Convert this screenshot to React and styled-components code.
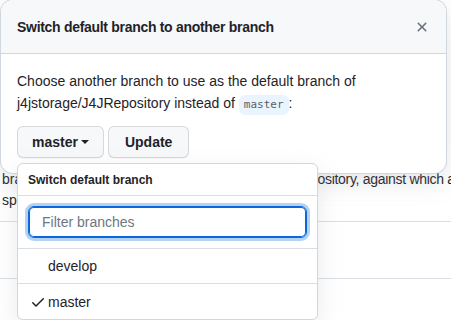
import React from 'react'
import styled, { createGlobalStyle } from 'styled-components'

const GlobalStyle = createGlobalStyle`
	body {
		margin: 0;
		background: #fff;
		font-family: 'Liberation Sans', Arial, sans-serif;
		color: #1f2328;
		overflow: hidden;
	}
`

const XIcon = () => (
	<svg width='16' height='16' viewBox='0 0 16 16' fill='currentColor'>
		<path d='M3.72 3.72a.75.75 0 0 1 1.06 0L8 6.94l3.22-3.22a.749.749 0 0 1 1.275.326.749.749 0 0 1-.215.734L9.06 8l3.22 3.22a.749.749 0 0 1-.326 1.275.749.749 0 0 1-.734-.215L8 9.06l-3.22 3.22a.751.751 0 0 1-1.042-.018.751.751 0 0 1-.018-1.042L6.94 8 3.72 4.78a.75.75 0 0 1 0-1.06Z' />
	</svg>
)

const CheckIcon = () => (
	<svg width='16' height='16' viewBox='0 0 16 16' fill='currentColor'>
		<path d='M13.78 4.22a.75.75 0 0 1 0 1.06l-7.25 7.25a.75.75 0 0 1-1.06 0L2.22 9.28a.751.751 0 0 1 .018-1.042.751.751 0 0 1 1.042-.018L6 10.94l6.72-6.72a.75.75 0 0 1 1.06 0Z' />
	</svg>
)

const branches = [
	{ name: 'develop', current: false },
	{ name: 'master', current: true },
]

const App = () => {
	return (
		<Page>
			<GlobalStyle />
			<Backdrop>
				<BehindText>
					<BehindLine>
						<Clipped>branch is considered the base branch in your rep</Clipped>
						<span>pository, against which all</span>
					</BehindLine>
					<BehindLine>specify a different branch.</BehindLine>
				</BehindText>
				<BehindRow />
			</Backdrop>

			<Dialog>
				<DialogHeader>
					<DialogTitle>Switch default branch to another branch</DialogTitle>
					<CloseButton aria-label='Close'>
						<XIcon />
					</CloseButton>
				</DialogHeader>
				<DialogBody>
					<Text>
						Choose another branch to use as the default branch of
						j4jstorage/J4JRepository instead of <Code>master</Code>:
					</Text>
					<Actions>
						<MenuWrap>
							<Button $caret>
								master <Caret />
							</Button>
							<Menu>
								<MenuHeader>Switch default branch</MenuHeader>
								<FilterBox>
									<FilterInput placeholder='Filter branches' autoFocus />
								</FilterBox>
								{branches.map((b) => (
									<MenuItem key={b.name}>
										<CheckSlot $visible={b.current}>
											<CheckIcon />
										</CheckSlot>
										{b.name}
									</MenuItem>
								))}
							</Menu>
						</MenuWrap>
						<Button>Update</Button>
					</Actions>
				</DialogBody>
			</Dialog>
		</Page>
	)
}

export default App

const Page = styled.div`
	position: relative;
	width: 451px;
	height: 320px;
	overflow: hidden;
`

const Backdrop = styled.div`
	padding-top: 169px;
`

const BehindText = styled.div`
	padding: 0 0 10px 2px;
	font-size: 14px;
	line-height: 21px;
	white-space: nowrap;
`

const BehindLine = styled.div`
	display: flex;

	& > span + span {
		letter-spacing: -0.3px;
	}
`

const Clipped = styled.span`
	width: 308px;
	overflow: hidden;
	flex: none;
`

const BehindRow = styled.div`
	height: 56px;
	border-top: 1px solid #d8dee4;
	border-bottom: 1px solid #d8dee4;
`

const Dialog = styled.div`
	position: absolute;
	top: 0;
	left: 1px;
	width: 445px;
	background: #fff;
	border-radius: 12px;
	box-shadow: 0 0 0 1px #d0d7de, 0 8px 24px rgba(140, 149, 159, 0.25);
`

const DialogHeader = styled.div`
	display: flex;
	align-items: center;
	justify-content: space-between;
	height: 54px;
	padding: 0 16px;
	box-sizing: border-box;
	background: #f6f8fa;
	border-bottom: 1px solid #d0d7de;
	border-radius: 12px 12px 0 0;
`

const DialogTitle = styled.h1`
	margin: 0;
	font-size: 14px;
	font-weight: 700;
	letter-spacing: -0.3px;
	color: #1f2328;
`

const CloseButton = styled.button`
	display: flex;
	padding: 0;
	margin-right: 0;
	border: 0;
	background: none;
	color: #656d76;
`

const DialogBody = styled.div`
	padding: 16px 16px 15px;
`

const Text = styled.p`
	margin: 0 0 11px;
	font-size: 14px;
	line-height: 22px;
`

const Code = styled.code`
	display: inline-block;
	padding: 0 5px;
	line-height: 20px;
	font-family: 'DejaVu Sans Mono', monospace;
	font-size: 11px;
	color: #57606a;
	background: #eaf4ff;
	border-radius: 6px;
`

const Actions = styled.div`
	display: flex;
	gap: 4px;
`

const MenuWrap = styled.div`
	position: relative;
`

const Button = styled.button`
	display: flex;
	align-items: center;
	gap: 3px;
	height: 32px;
	padding: 0 ${(p) => (p.$caret ? '14px' : '16px')};
	font-family: inherit;
	font-size: 14px;
	font-weight: 600;
	color: #1f2328;
	background: #f6f8fa;
	border: 1px solid rgba(31, 35, 40, 0.15);
	border-radius: 6px;
	box-shadow: 0 1px 0 rgba(31, 35, 40, 0.04);
`

const Caret = styled.span`
	width: 0;
	height: 0;
	border-top: 4px solid currentColor;
	border-left: 4px solid transparent;
	border-right: 4px solid transparent;
`

const Menu = styled.div`
	position: absolute;
	top: calc(100% + 5px);
	left: 0;
	z-index: 10;
	width: 299px;
	background: #fff;
	border: 1px solid #d0d7de;
	border-radius: 6px;
	box-shadow: 0 8px 24px rgba(140, 149, 159, 0.2);
	overflow: hidden;
`

const MenuHeader = styled.div`
	height: 31px;
	padding: 0 10px;
	display: flex;
	align-items: center;
	font-size: 12px;
	font-weight: 700;
	border-bottom: 1px solid #d8dee4;
`

const FilterBox = styled.div`
	padding: 10px;
	border-bottom: 1px solid #d8dee4;
`

const FilterInput = styled.input`
	display: block;
	width: 100%;
	box-sizing: border-box;
	height: 32px;
	padding: 0 13px;
	font-family: inherit;
	font-size: 14px;
	color: #1f2328;
	border: 1px solid #0969da;
	border-radius: 6px;
	outline: none;
	box-shadow: inset 0 0 0 1px #0969da, 0 0 0 3px rgba(9, 105, 218, 0.3);
	caret-color: #1f2328;

	&::placeholder {
		color: #6e7781;
	}
`

const MenuItem = styled.div`
	display: flex;
	align-items: center;
	gap: 2px;
	height: 34px;
	padding: 0 12px;
	font-size: 14px;
	color: #1f2328;

	& + & {
		border-top: 1px solid #d8dee4;
		height: 35px;
	}
`

const CheckSlot = styled.span`
	display: flex;
	width: 16px;
	visibility: ${(p) => (p.$visible ? 'visible' : 'hidden')};
`
